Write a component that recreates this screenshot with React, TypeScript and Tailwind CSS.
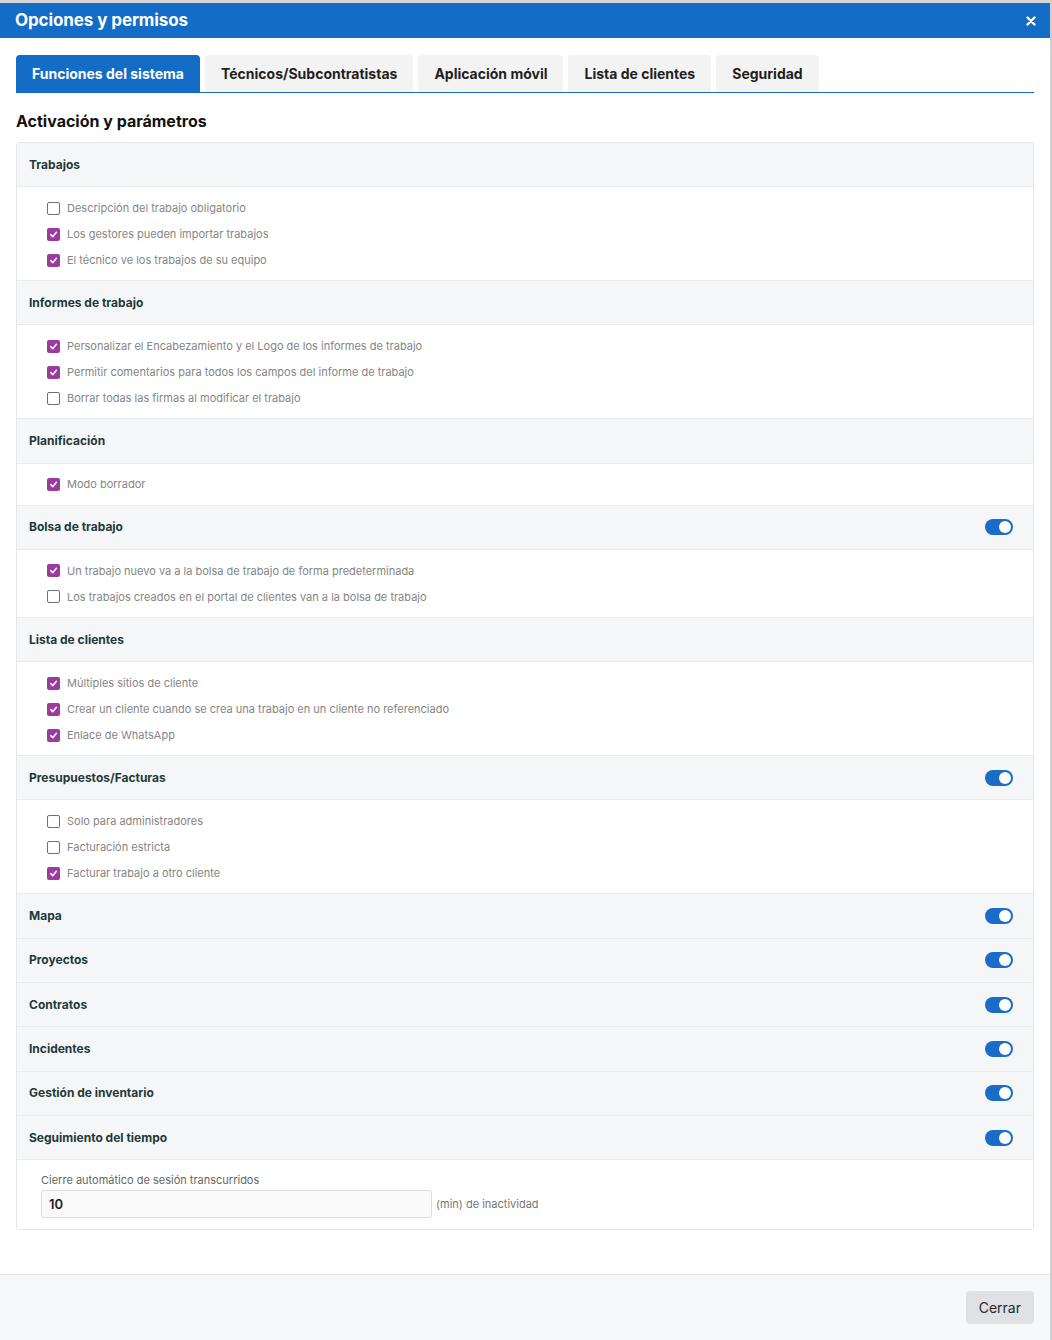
import { useState } from 'react'

type Item = { label: string; checked: boolean }
type Section = { title: string; toggle?: boolean; items?: Item[] }

const SECTIONS: Section[] = [
  {
    title: 'Trabajos',
    items: [
      { label: 'Descripción del trabajo obligatorio', checked: false },
      { label: 'Los gestores pueden importar trabajos', checked: true },
      { label: 'El técnico ve los trabajos de su equipo', checked: true },
    ],
  },
  {
    title: 'Informes de trabajo',
    items: [
      { label: 'Personalizar el Encabezamiento y el Logo de los informes de trabajo', checked: true },
      { label: 'Permitir comentarios para todos los campos del informe de trabajo', checked: true },
      { label: 'Borrar todas las firmas al modificar el trabajo', checked: false },
    ],
  },
  {
    title: 'Planificación',
    items: [{ label: 'Modo borrador', checked: true }],
  },
  {
    title: 'Bolsa de trabajo',
    toggle: true,
    items: [
      { label: 'Un trabajo nuevo va a la bolsa de trabajo de forma predeterminada', checked: true },
      { label: 'Los trabajos creados en el portal de clientes van a la bolsa de trabajo', checked: false },
    ],
  },
  {
    title: 'Lista de clientes',
    items: [
      { label: 'Múltiples sitios de cliente', checked: true },
      { label: 'Crear un cliente cuando se crea una trabajo en un cliente no referenciado', checked: true },
      { label: 'Enlace de WhatsApp', checked: true },
    ],
  },
  {
    title: 'Presupuestos/Facturas',
    toggle: true,
    items: [
      { label: 'Solo para administradores', checked: false },
      { label: 'Facturación estricta', checked: false },
      { label: 'Facturar trabajo a otro cliente', checked: true },
    ],
  },
  { title: 'Mapa', toggle: true },
  { title: 'Proyectos', toggle: true },
  { title: 'Contratos', toggle: true },
  { title: 'Incidentes', toggle: true },
  { title: 'Gestión de inventario', toggle: true },
  { title: 'Seguimiento del tiempo', toggle: true },
]

const TABS = [
  'Funciones del sistema',
  'Técnicos/Subcontratistas',
  'Aplicación móvil',
  'Lista de clientes',
  'Seguridad',
]

function Checkbox({ checked }: { checked: boolean }) {
  return checked ? (
    <span className="w-[13px] h-[13px] rounded-[2px] bg-[#9b3a9f] flex items-center justify-center shrink-0">
      <svg width="9" height="9" viewBox="0 0 10 10" fill="none">
        <path d="M2 5.2L4.2 7.4L8.2 2.6" stroke="white" strokeWidth="1.8"
              strokeLinecap="round" strokeLinejoin="round"/>
      </svg>
    </span>
  ) : (
    <span className="w-[13px] h-[13px] rounded-[2px] border border-[#6f6f6f] bg-white shrink-0"/>
  )
}

function Toggle() {
  return (
    <span className="w-[28px] h-[16px] rounded-full bg-[#1a6cc8] flex items-center justify-end pr-[2px]">
      <span className="w-[12px] h-[12px] rounded-full bg-white"/>
    </span>
  )
}

export default function App() {
  const [tab] = useState(0)

  return (
    <div className="flex w-[1052px] min-h-[1340px] bg-[#cfcfcf]"
         style={{ fontFamily: 'Inter, "Liberation Sans", sans-serif' }}>
      <div className="w-[1050px] bg-white flex flex-col">

        {/* Title bar */}
        <div className="h-[3px] bg-[#d6d6d6]"/>
        <div className="h-[35px] bg-[#136cc6] flex items-center justify-between pl-[15px] pr-[14px]">
          <span className="text-white font-bold text-[17px] tracking-[-0.1px] pt-[1px]">
            Opciones y permisos
          </span>
          <svg width="10" height="10" viewBox="0 0 10 10">
            <path d="M1.5 1.5L8.5 8.5M8.5 1.5L1.5 8.5" stroke="white"
                  strokeWidth="2.4" strokeLinecap="round"/>
          </svg>
        </div>

        {/* Body */}
        <div className="px-4 pt-[17px] pb-[44px] flex-1">
          <div className="flex gap-[5px] border-b border-[#136cc6]">
            {TABS.map((t, i) => (
              <div
                key={t}
                className={`h-[37px] px-4 flex items-center rounded-t-[4px] text-[14px] font-bold
                  ${i === tab ? 'bg-[#136cc6] text-white' : 'bg-[#f3f3f3] text-[#1f1f1f]'}`}
              >
                {t}
              </div>
            ))}
          </div>

          <h2 className="text-[16px] font-bold text-[#111] mt-[17px] mb-[10px] leading-[22px]">
            Activación y parámetros
          </h2>

          <div className="border border-[#e4e6e9] rounded-[3px] overflow-hidden">
            {SECTIONS.map((s, si) => (
              <div key={s.title}>
                <div className={`bg-[#f5f6f8] flex items-center justify-between pl-[12px] pr-[20px]
                  ${si > 0 ? 'h-[44.3px] border-t border-[#e9ebee]' : 'h-[43px]'}`}>
                  <span className="text-[12px] font-bold text-[#1f3938]">{s.title}</span>
                  {s.toggle && <Toggle/>}
                </div>
                {s.items && (
                  <div className="border-t border-[#e9ebee] bg-white pt-[8px] pb-[7px] pl-[30px]">
                    {s.items.map(it => (
                      <div key={it.label} className="h-[26px] flex items-center gap-[7px]">
                        <Checkbox checked={it.checked}/>
                        <span className="text-[11px] text-[#858585]">{it.label}</span>
                      </div>
                    ))}
                  </div>
                )}
              </div>
            ))}

            {/* Auto logout */}
            <div className="border-t border-[#e9ebee] bg-white pt-[13px] pb-[11px] pl-[24px]">
              <div className="text-[11px] text-[#666] leading-[15px]">
                Cierre automático de sesión transcurridos
              </div>
              <div className="flex items-center gap-[4px] mt-[2px]">
                <div className="w-[391px] h-[28px] bg-[#fafafa] border border-[#dcdcdc] rounded-[3px]
                                flex items-center px-[7px] text-[13px] font-semibold text-[#222]">
                  10
                </div>
                <span className="text-[11px] text-[#777]">(min) de inactividad</span>
              </div>
            </div>
          </div>
        </div>

        {/* Footer */}
        <div className="h-[66px] bg-[#f7f8fa] border-t border-[#e3e5e8] flex items-center justify-end px-4">
          <button className="h-[33px] px-[13px] rounded-[4px] bg-[#dfe1e5] text-[14px] text-[#2a2a2a]">
            Cerrar
          </button>
        </div>
      </div>
    </div>
  )
}
